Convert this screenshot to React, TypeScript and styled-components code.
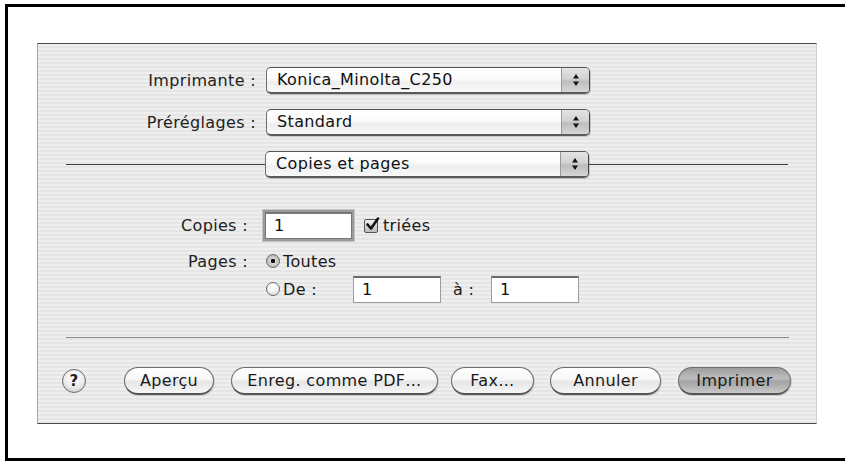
import React from "react";
import styled, { createGlobalStyle, css } from "styled-components";

const GlobalStyle = createGlobalStyle`
  html, body {
    margin: 0;
    padding: 0;
    background: #ffffff;
  }
  body {
    font-family: "DejaVu Sans", "Liberation Sans", sans-serif;
    color: #1a1a1a;
    letter-spacing: 0.35px;
  }
`;

const Frame = styled.div`
  box-sizing: border-box;
  margin: 4px 0 0 5px;
  width: 840px;
  height: 457px;
  border-top: 3px solid #000;
  border-left: 3px solid #000;
  border-bottom: 3px solid #000;
  padding: 36px 0 0 29px;
`;

const Panel = styled.div`
  box-sizing: border-box;
  width: 780px;
  height: 381px;
  border-top: 1px solid #4a4a4a;
  border-bottom: 1px solid #4a4a4a;
  border-left: 1px solid #a8a8a8;
  border-right: 1px solid #d0d0d0;
  background: repeating-linear-gradient(
    to bottom,
    #eeeeee 0px,
    #eeeeee 2px,
    #e5e5e5 2px,
    #e5e5e5 4px
  );
  padding-top: 23px;
  display: flex;
  flex-direction: column;
`;

const Row = styled.div<{ $top?: number; $h?: number }>`
  display: flex;
  align-items: center;
  height: ${({ $h }) => $h ?? 26}px;
  margin-top: ${({ $top }) => $top ?? 0}px;
`;

const Label = styled.div<{ $w: number; $gap: number }>`
  width: ${({ $w }) => $w}px;
  margin-right: ${({ $gap }) => $gap}px;
  text-align: right;
  font-size: 16px;
  color: #222;
  white-space: nowrap;
`;

const PopupBox = styled.div`
  box-sizing: border-box;
  width: 324px;
  height: 27px;
  display: flex;
  border: 1px solid #6e6e6e;
  border-top-color: #555;
  border-right-color: #444;
  border-bottom: 2px solid #5a5a5a;
  border-radius: 5px;
  overflow: hidden;
  background: linear-gradient(to bottom, #ffffff 0%, #fbfbfb 45%, #eeeeee 60%, #f9f9f9 100%);
  box-shadow: 1px 1px 0 rgba(0, 0, 0, 0.15);
`;

const PopupText = styled.div`
  flex: 1;
  padding-left: 10px;
  font-size: 16px;
  line-height: 24px;
  color: #111;
  white-space: nowrap;
`;

const Stepper = styled.div`
  width: 27px;
  border-left: 1px solid #9a9a9a;
  background: linear-gradient(to bottom, #e4e4e4 0%, #d2d2d2 45%, #bdbdbd 55%, #d6d6d6 100%);
  display: flex;
  align-items: center;
  justify-content: center;
`;

const Arrows = () => (
  <svg width="8" height="14" viewBox="0 0 8 14">
    <path d="M4 1 L7 5.5 L1 5.5 Z" fill="#111" />
    <path d="M4 13 L7 8.5 L1 8.5 Z" fill="#111" />
  </svg>
);

const Popup = ({ value }: { value: string }) => (
  <PopupBox>
    <PopupText>{value}</PopupText>
    <Stepper>
      <Arrows />
    </Stepper>
  </PopupBox>
);

const DividerRow = styled(Row)`
  padding: 0 28px;
`;

const Line = styled.div`
  flex: 1;
  height: 1px;
  background: #3e3e3e;
`;

const Field = styled.div<{ $w: number; $focus?: boolean }>`
  box-sizing: border-box;
  width: ${({ $w }) => $w}px;
  height: 27px;
  background: #fff;
  border: 1px solid #9c9c9c;
  border-top: 2px solid #6a6a6a;
  padding-left: 8px;
  font-size: 16px;
  line-height: 23px;
  color: #111;
  ${({ $focus }) =>
    $focus &&
    css`
      box-shadow: 0 0 0 2px #9a9a9a, 0 0 0 3px #c4c4c4;
      border-color: #777;
    `}
`;

const Check = styled.div`
  box-sizing: border-box;
  width: 14px;
  height: 14px;
  margin: 0 5px 0 12px;
  border: 1px solid #555;
  border-radius: 2px;
  background: linear-gradient(to bottom, #f2f2f2, #bcbcbc);
  position: relative;
`;

const CheckMark = () => (
  <svg width="15" height="15" viewBox="0 0 15 15" style={{ position: "absolute", left: 0, top: -3 }}>
    <path d="M2.5 7.5 L6 11.5 L13 1.5" stroke="#111" strokeWidth="2.6" fill="none" strokeLinecap="round" strokeLinejoin="round" />
  </svg>
);

const Text = styled.span<{ $w?: number; $pad?: number }>`
  box-sizing: border-box;
  font-size: 16px;
  color: #1a1a1a;
  white-space: nowrap;
  display: inline-block;
  padding-left: ${({ $pad }) => $pad ?? 0}px;
  ${({ $w }) => $w && `width: ${$w}px;`}
`;

const Radio = styled.div<{ $on?: boolean }>`
  box-sizing: border-box;
  width: 14px;
  height: 14px;
  margin: 0 3px 0 1px;
  border-radius: 50%;
  border: 1px solid #6a6a6a;
  background: ${({ $on }) =>
    $on
      ? "radial-gradient(circle at 50% 50%, #111 0, #111 2px, #d8d8d8 2.5px, #a8a8a8 100%)"
      : "radial-gradient(circle at 50% 30%, #ffffff 0, #f2f2f2 50%, #cfcfcf 100%)"};
`;

const Separator = styled.div`
  margin: 34px 27px 0 28px;
  height: 1px;
  background: #8e8e8e;
`;

const ButtonBar = styled.div`
  display: flex;
  align-items: center;
  margin-top: 29px;
  padding-left: 24px;
`;

const HelpButton = styled.div`
  box-sizing: border-box;
  width: 24px;
  height: 24px;
  border-radius: 50%;
  border: 1px solid #6a6a6a;
  background: radial-gradient(circle at 50% 30%, #ffffff 0, #ececec 55%, #bdbdbd 100%);
  display: flex;
  align-items: center;
  justify-content: center;
  font-size: 15px;
  font-weight: bold;
  color: #222;
  margin-right: 38px;
`;

const Button = styled.div<{ $w: number; $gap?: number; $default?: boolean }>`
  box-sizing: border-box;
  width: ${({ $w }) => $w}px;
  height: 28px;
  margin-right: ${({ $gap }) => $gap ?? 0}px;
  border-radius: 14px;
  border: 1px solid #6c6c6c;
  border-bottom: 2px solid #555;
  display: flex;
  align-items: center;
  justify-content: center;
  font-size: 16px;
  color: #1a1a1a;
  white-space: nowrap;
  background: ${({ $default }) =>
    $default
      ? "linear-gradient(to bottom, #9c9c9c 0%, #bdbdbd 40%, #a4a4a4 55%, #c8c8c8 100%)"
      : "linear-gradient(to bottom, #ffffff 0%, #f7f7f7 45%, #e6e6e6 55%, #f6f6f6 100%)"};
  box-shadow: 1px 1px 0 rgba(0, 0, 0, 0.12);
`;

export default function App() {
  return (
    <>
      <GlobalStyle />
      <Frame>
        <Panel>
          <Row>
            <Label $w={218} $gap={10}>Imprimante :</Label>
            <Popup value="Konica_Minolta_C250" />
          </Row>
          <Row $top={16}>
            <Label $w={218} $gap={10}>Préréglages :</Label>
            <Popup value="Standard" />
          </Row>
          <DividerRow $top={16}>
            <Line />
            <Popup value="Copies et pages" />
            <Line />
          </DividerRow>

          <Row $top={35} $h={27}>
            <Label $w={210} $gap={17}>Copies :</Label>
            <Field $w={87} $focus>1</Field>
            <Check>
              <CheckMark />
            </Check>
            <Text>triées</Text>
          </Row>
          <Row $top={11} $h={22}>
            <Label $w={210} $gap={17}>Pages :</Label>
            <Radio $on />
            <Text>Toutes</Text>
          </Row>
          <Row $top={3} $h={28}>
            <Label $w={210} $gap={17} />
            <Radio />
            <Text $w={70}>De :</Text>
            <Field $w={88}>1</Field>
            <Text $w={50} $pad={12}>à :</Text>
            <Field $w={88}>1</Field>
          </Row>

          <Separator />

          <ButtonBar>
            <HelpButton>?</HelpButton>
            <Button $w={90} $gap={17}>Aperçu</Button>
            <Button $w={207} $gap={13}>Enreg. comme PDF…</Button>
            <Button $w={83} $gap={16}>Fax…</Button>
            <Button $w={111} $gap={17}>Annuler</Button>
            <Button $w={113} $default>Imprimer</Button>
          </ButtonBar>
        </Panel>
      </Frame>
    </>
  );
}
